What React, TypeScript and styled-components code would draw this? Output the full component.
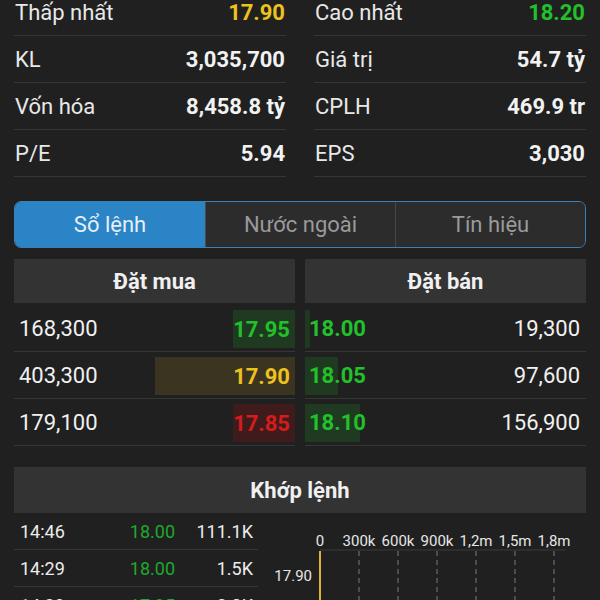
import React from 'react'
import styled, { createGlobalStyle } from 'styled-components'

const GlobalStyle = createGlobalStyle`
    html, body {
        margin: 0;
        padding: 0;
        background: #202020;
    }
    body {
        font-family: Roboto, "Noto Sans", "Liberation Sans", sans-serif;
        color: #ececec;
    }
`

type Tone = 'green' | 'yellow' | 'red' | 'white'

const toneColor: Record<Tone, string> = {
    green: '#22c02a',
    yellow: '#eec21c',
    red: '#d41c1c',
    white: '#f2f2f2',
}

const toneBg: Record<Tone, string> = {
    green: '#1f3a21',
    yellow: '#3a3421',
    red: '#3f1b1b',
    white: 'transparent',
}

interface Stat {
    label: string,
    value: string,
    tone: Tone,
}

const leftStats: Stat[] = [
    { label: 'Thấp nhất', value: '17.90', tone: 'yellow' },
    { label: 'KL', value: '3,035,700', tone: 'white' },
    { label: 'Vốn hóa', value: '8,458.8 tỷ', tone: 'white' },
    { label: 'P/E', value: '5.94', tone: 'white' },
]

const rightStats: Stat[] = [
    { label: 'Cao nhất', value: '18.20', tone: 'green' },
    { label: 'Giá trị', value: '54.7 tỷ', tone: 'white' },
    { label: 'CPLH', value: '469.9 tr', tone: 'white' },
    { label: 'EPS', value: '3,030', tone: 'white' },
]

interface Order {
    volume: string,
    price: string,
    tone: Tone,
    bar: number,
}

const bids: Order[] = [
    { volume: '168,300', price: '17.95', tone: 'green', bar: 59 },
    { volume: '403,300', price: '17.90', tone: 'yellow', bar: 140 },
    { volume: '179,100', price: '17.85', tone: 'red', bar: 62 },
]

const asks: Order[] = [
    { volume: '19,300', price: '18.00', tone: 'green', bar: 5 },
    { volume: '97,600', price: '18.05', tone: 'green', bar: 33 },
    { volume: '156,900', price: '18.10', tone: 'green', bar: 55 },
]

const trades = [
    { time: '14:46', price: '18.00', volume: '111.1K', tone: 'green' as Tone },
    { time: '14:29', price: '18.00', volume: '1.5K', tone: 'green' as Tone },
    { time: '14:29', price: '17.95', volume: '2.0K', tone: 'green' as Tone },
]

const ticks = ['0', '300k', '600k', '900k', '1,2m', '1,5m', '1,8m']

const StatColumn: React.FC<{ items: Stat[] }> = ({ items }) => (
    <div>
        {items.map(s => (
            <StatRow key={s.label}>
                <StatLabel>{s.label}</StatLabel>
                <StatValue tone={s.tone}>{s.value}</StatValue>
            </StatRow>
        ))}
    </div>
)

const VolumeChart = () => {
    const x0 = 58
    const step = 39
    return (
        <ChartSvg width={324} height={90} viewBox="0 0 324 90">
            {ticks.map((t, i) => (
                <text key={t} x={x0 + i * step} y={33} fill="#e6e6e6" fontSize={15} textAnchor="middle" fontFamily="Roboto, sans-serif">{t}</text>
            ))}
            <line x1={x0} y1={37} x2={x0 + 6 * step + 12} y2={37} stroke="#3a3a3a" strokeWidth={1} />
            {ticks.slice(1).map((t, i) => (
                <line key={t} x1={x0 + (i + 1) * step} y1={38} x2={x0 + (i + 1) * step} y2={90} stroke="#7a7a7a" strokeWidth={1} strokeDasharray="5 4" />
            ))}
            <rect x={x0 - 1} y={38} width={2} height={52} fill="#e0b23a" />
            <text x={50} y={68} fill="#e6e6e6" fontSize={15} textAnchor="end" fontFamily="Roboto, sans-serif">17.90</text>
        </ChartSvg>
    )
}

const App = () => {
    return (
        <Page>
            <GlobalStyle />
            <Stats>
                <StatColumn items={leftStats} />
                <StatColumn items={rightStats} />
            </Stats>

            <Tabs>
                <Tab active>Sổ lệnh</Tab>
                <Tab>Nước ngoài</Tab>
                <Tab>Tín hiệu</Tab>
            </Tabs>

            <Book>
                <div>
                    <Header>Đặt mua</Header>
                    {bids.map(o => (
                        <OrderRow key={o.price}>
                            <Volume>{o.volume}</Volume>
                            <BidPrice tone={o.tone} style={{ minWidth: o.bar }}>{o.price}</BidPrice>
                        </OrderRow>
                    ))}
                </div>
                <div>
                    <Header>Đặt bán</Header>
                    {asks.map(o => (
                        <OrderRow key={o.price}>
                            <AskBar tone={o.tone} style={{ width: o.bar }} />
                            <AskPrice tone={o.tone}>{o.price}</AskPrice>
                            <Volume>{o.volume}</Volume>
                        </OrderRow>
                    ))}
                </div>
            </Book>

            <MatchHeader>Khớp lệnh</MatchHeader>
            <Matches>
                <TradeList>
                    {trades.map((t, i) => (
                        <TradeRow key={i}>
                            <span>{t.time}</span>
                            <TradePrice tone={t.tone}>{t.price}</TradePrice>
                            <TradeVolume>{t.volume}</TradeVolume>
                        </TradeRow>
                    ))}
                </TradeList>
                <VolumeChart />
            </Matches>
        </Page>
    )
}

export default App

const Page = styled.div`
    width: 600px;
    height: 600px;
    overflow: hidden;
    background: #202020;
`

const Stats = styled.div`
    display: grid;
    grid-template-columns: 1fr 1fr;
    column-gap: 28px;
    padding: 0 14px;
    margin-top: -11px;
`

const StatRow = styled.div`
    display: flex;
    align-items: center;
    justify-content: space-between;
    height: 46px;
    padding: 0 1px 0 1px;
    border-bottom: 1px solid #363636;
    font-size: 22px;
`

const StatLabel = styled.span`
    color: #e8e8e8;
`

const StatValue = styled.span<{ tone: Tone }>`
    font-weight: bold;
    color: ${p => toneColor[p.tone]};
`

const Tabs = styled.div`
    display: grid;
    grid-template-columns: 1fr 1fr 1fr;
    margin: 24px 14px 0;
    height: 45px;
    border: 1px solid #3f7fb4;
    border-radius: 7px;
    overflow: hidden;
    background: #2b2b2b;
`

const Tab = styled.div<{ active?: boolean }>`
    display: flex;
    align-items: center;
    justify-content: center;
    font-size: 22px;
    color: ${p => p.active ? '#e6eef7' : '#9a9a9a'};
    background: ${p => p.active ? '#2a84c6' : '#2c2c2c'};
    & + & {
        border-left: 1px solid #484848;
    }
`

const Book = styled.div`
    display: grid;
    grid-template-columns: 281px 281px;
    column-gap: 10px;
    margin: 11px 14px 0;
`

const Header = styled.div`
    display: flex;
    align-items: center;
    justify-content: center;
    height: 44px;
    margin-bottom: 2px;
    background: #333333;
    font-size: 22px;
    font-weight: bold;
    color: #f0f0f0;
`

const OrderRow = styled.div`
    position: relative;
    display: flex;
    align-items: center;
    justify-content: space-between;
    height: 46px;
    border-bottom: 1px solid #363636;
    font-size: 22px;
`

const Volume = styled.span`
    padding: 0 6px 0 5px;
    color: #f0f0f0;
`

const BidPrice = styled.span<{ tone: Tone }>`
    box-sizing: border-box;
    display: flex;
    align-items: center;
    justify-content: flex-end;
    align-self: flex-end;
    height: 38px;
    margin-bottom: 3px;
    padding-right: 5px;
    font-weight: bold;
    color: ${p => toneColor[p.tone]};
    background: ${p => toneBg[p.tone]};
`

const AskBar = styled.div<{ tone: Tone }>`
    position: absolute;
    left: 0;
    bottom: 3px;
    height: 38px;
    background: ${p => toneBg[p.tone]};
`

const AskPrice = styled.span<{ tone: Tone }>`
    position: relative;
    padding-left: 4px;
    font-weight: bold;
    color: ${p => toneColor[p.tone]};
`

const MatchHeader = styled.div`
    display: flex;
    align-items: center;
    justify-content: center;
    height: 46px;
    margin: 21px 14px 0;
    background: #333333;
    font-size: 22px;
    font-weight: bold;
    color: #f0f0f0;
`

const Matches = styled.div`
    display: flex;
    margin: 0 14px;
    gap: 4px;
`

const TradeList = styled.div`
    width: 244px;
`

const TradeRow = styled.div`
    display: grid;
    grid-template-columns: 1fr 70px 78px;
    align-items: center;
    height: 36px;
    padding: 0 5px 0 6px;
    border-bottom: 1px solid #363636;
    font-size: 18px;
    color: #ececec;
`

const TradePrice = styled.span<{ tone: Tone }>`
    text-align: right;
    color: #1fa82d;
`

const TradeVolume = styled.span`
    text-align: right;
`

const ChartSvg = styled.svg`
    display: block;
    flex: none;
`
